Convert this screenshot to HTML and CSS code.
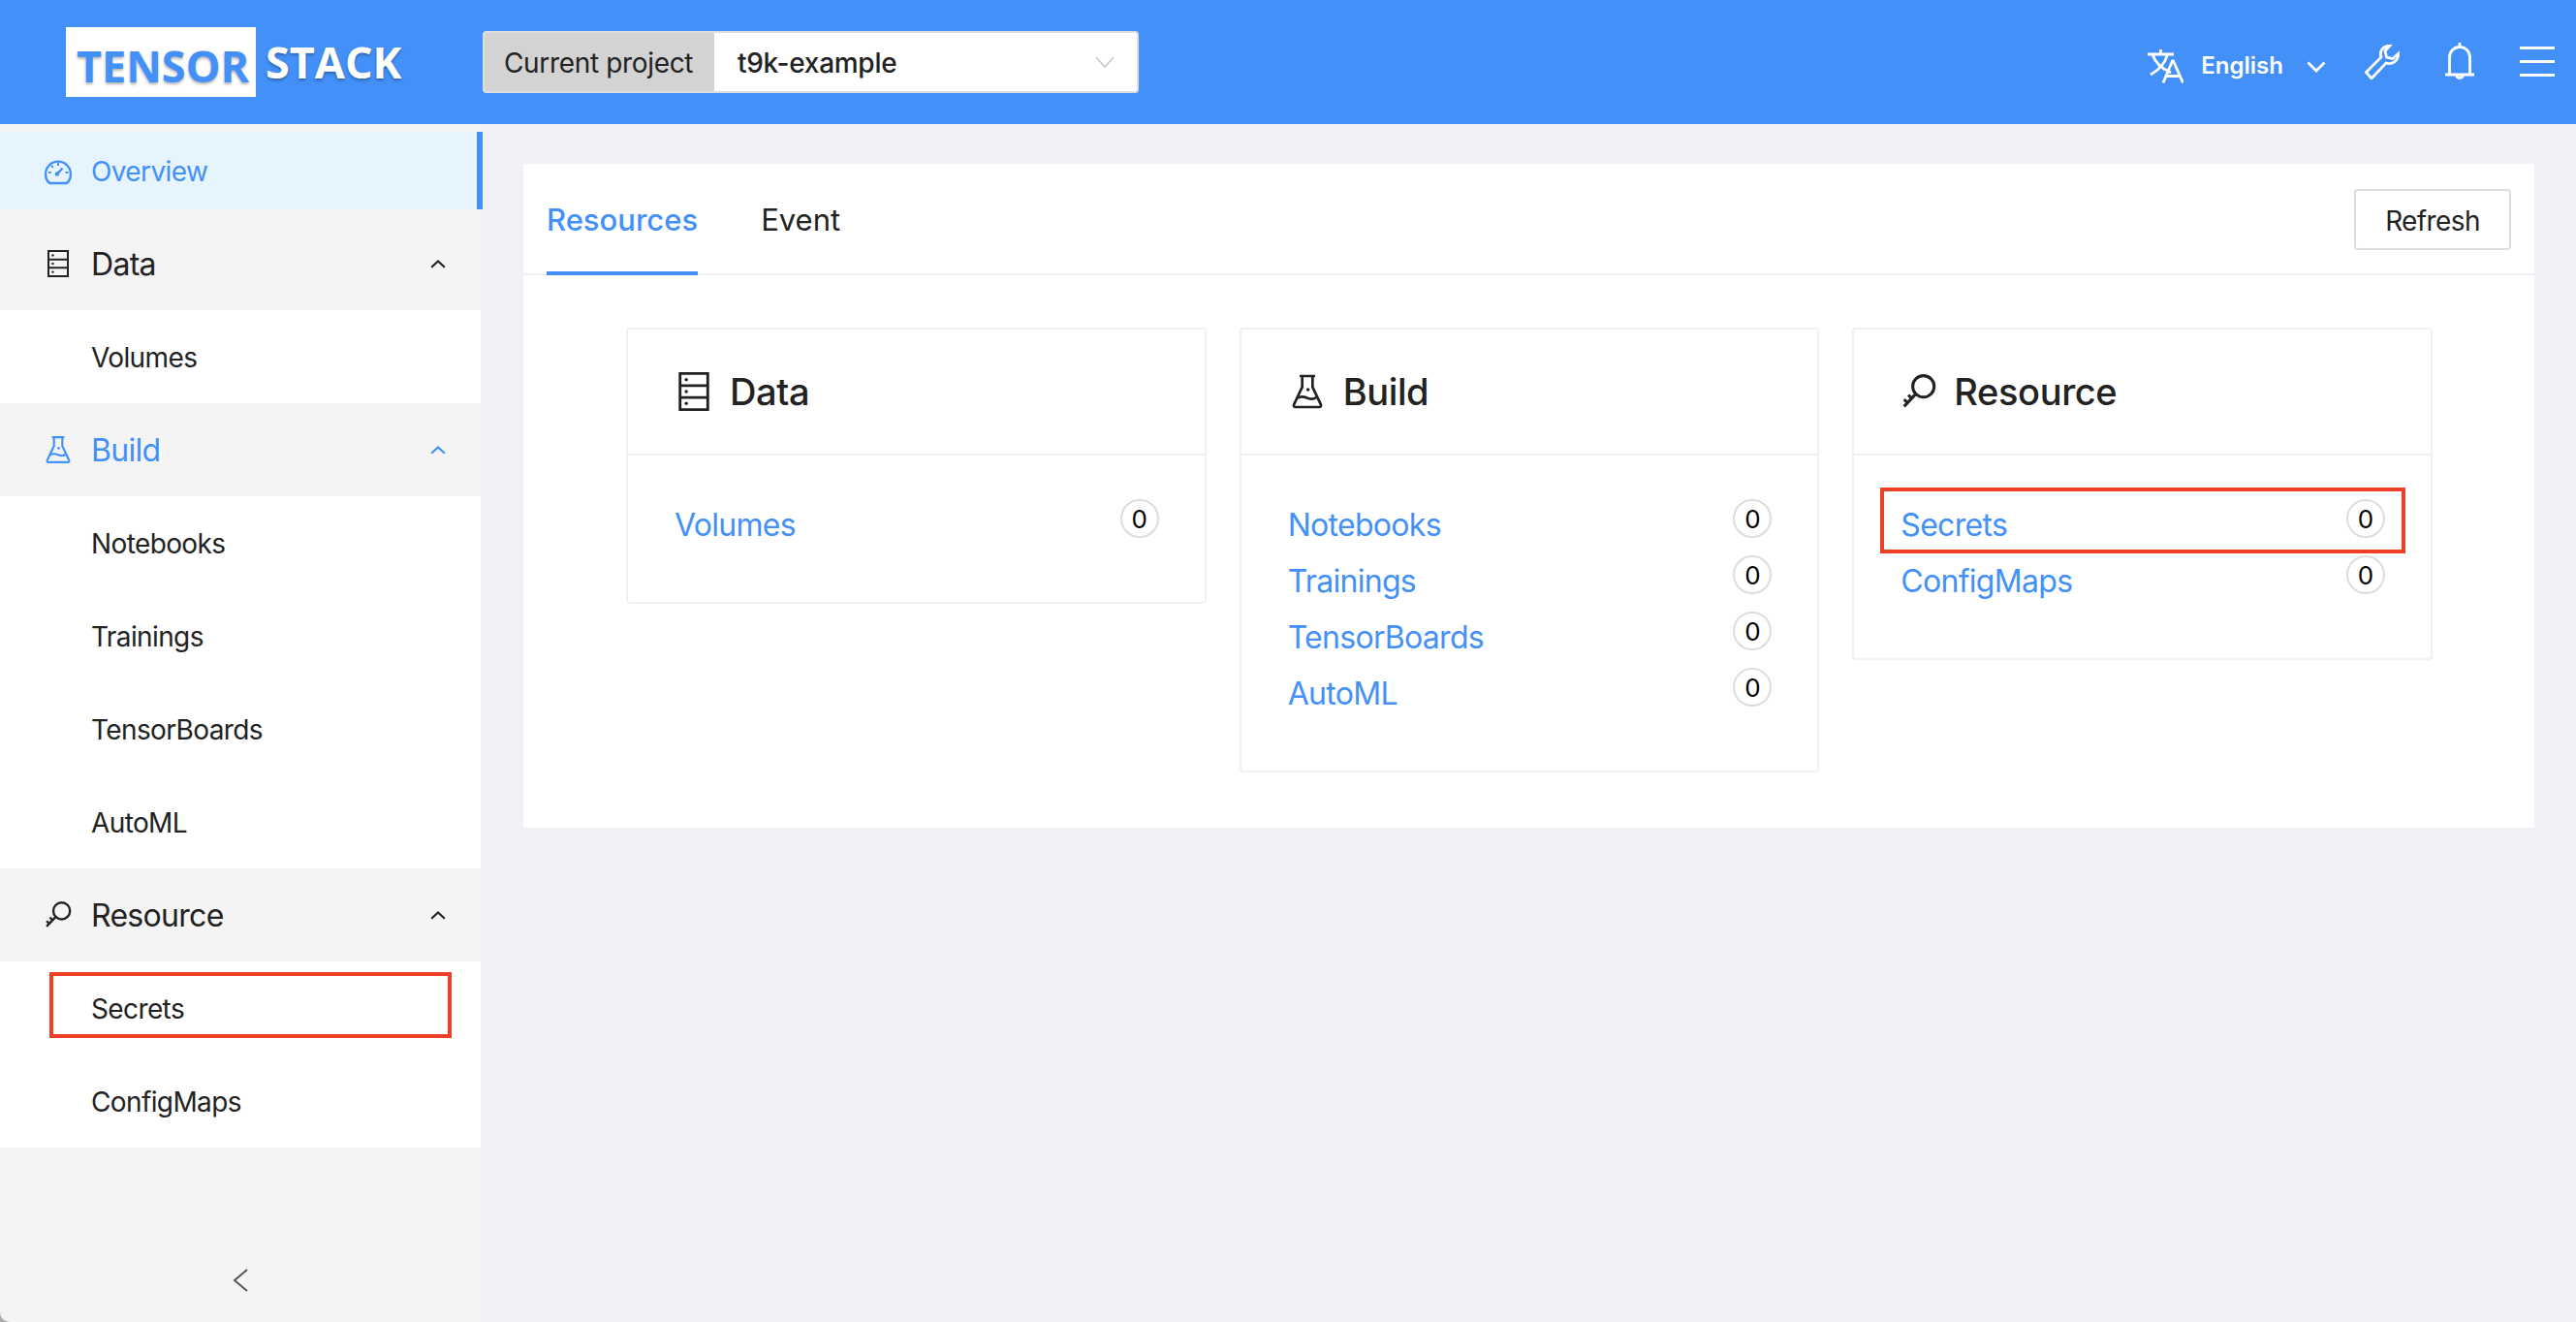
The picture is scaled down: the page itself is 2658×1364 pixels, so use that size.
FILE: index.html
```html
<!DOCTYPE html>
<html>
<head>
    <title>TensorStack</title>
    <link rel="stylesheet" href="styles.css">
</head>
<body>
    <svg class="sprite" width="0" height="0">
        <symbol id="i-gauge" viewBox="0 0 28 27">
            <path d="M6 25.500h16c1 0 1.700-.5 2.200-1.300a13 13 0 1 0-20.400 0c.5.800 1.200 1.300 2.200 1.300z" fill="none" stroke="currentColor" stroke-width="2.400"/>
            <path d="M13 16l5.500-6" fill="none" stroke="currentColor" stroke-width="2.400"/>
            <circle cx="13" cy="16" r="2.200" fill="currentColor"/>
            <path d="M14 4.500v3M4 14.500h2.800M21.500 14.500H24.500M7 7.500l1.800 1.800" fill="none" stroke="currentColor" stroke-width="2"/>
        </symbol>
        <symbol id="i-server" viewBox="0 0 22 28">
            <path d="M1 1h20v26H1zM1 9.700h20M1 18.300h20" fill="none" stroke="currentColor" stroke-width="2"/>
            <circle cx="5.500" cy="5.400" r="1.200" fill="currentColor"/>
            <circle cx="5.500" cy="14" r="1.200" fill="currentColor"/>
            <circle cx="5.500" cy="22.600" r="1.200" fill="currentColor"/>
        </symbol>
        <symbol id="i-flask" viewBox="0 0 24 26">
            <path d="M6 1h12M8 1v8.500L1.600 23c-.5 1.100.1 2 1.300 2h18.200c1.200 0 1.800-.9 1.300-2L16 9.500V1" fill="none" stroke="currentColor" stroke-width="2"/>
            <path d="M4.500 18c3-2.200 5.500-.8 8 .2 2.500.9 4.500.7 6.500-.7" fill="none" stroke="currentColor" stroke-width="2"/>
            <circle cx="12.500" cy="11.500" r="1.300" fill="currentColor"/>
        </symbol>
        <symbol id="i-key" viewBox="0 0 26 27">
            <circle cx="16.500" cy="9.500" r="8.300" fill="none" stroke="currentColor" stroke-width="2.300"/>
            <path d="M10.500 15.500L1.500 25M4.200 22.200l-2.700-2.700M7.500 18.800l-2.700-2.700" fill="none" stroke="currentColor" stroke-width="2.300"/>
        </symbol>
        <symbol id="i-up" viewBox="0 0 16 9">
            <path d="M1.200 7.800L8 1.500l6.800 6.300" fill="none" stroke="currentColor" stroke-width="2.200"/>
        </symbol>
    </svg>

    <header class="topbar">
        <div class="logo">
            <span class="logo-box">TENSOR</span>
            <span class="logo-rest">STACK</span>
        </div>
        <div class="project">
            <span class="project-label">Current project</span>
            <span class="project-value">t9k-example</span>
            <svg class="project-arrow" viewBox="0 0 20 12"><path d="M1 1l9 10 9-10" fill="none" stroke="#c4c4c4" stroke-width="1.500"/></svg>
        </div>
        <div class="topbar-right">
            <svg class="icon-lang" viewBox="0 0 37 36">
                <path d="M0 6h27M13.500 1v5M20.500 6C18.500 14 12 22 3 27M5 6C7 13 13 20 24 25" fill="none" stroke="#fff" stroke-width="2.800"/>
                <path d="M16 35.500L25.500 13h1l10 22.500M19 28.500h14" fill="none" stroke="#fff" stroke-width="2.800"/>
            </svg>
            <span class="lang-name">English</span>
            <svg class="icon-lang-arrow" viewBox="0 0 20 12"><path d="M1.500 1.500L10 10l8.500-8.500" fill="none" stroke="#fff" stroke-width="2.800"/></svg>
            <svg class="icon-wrench" viewBox="0 0 36 36">
                <path d="M1.500 28.500L17 13c-2-5.500 1-11.500 9-12l-5 5.500 1.500 6.500 6.500 1.500 5.500-5c.3 7.500-6 11.500-12.500 9.500L7 35z" fill="none" stroke="#fff" stroke-width="2.800"/>
            </svg>
            <svg class="icon-bell" viewBox="0 0 30 40">
                <path d="M15 0v4M4.500 33V15a10.500 10.500 0 0 1 21 0v18M0 33h30M11.500 33a3.500 3.500 0 0 0 7 0" fill="none" stroke="#fff" stroke-width="2.800"/>
            </svg>
            <div class="hamburger"><i></i><i></i><i></i></div>
        </div>
    </header>

    <div class="layout">
        <nav class="sidebar">
            <a class="nav-top">
                <svg class="nav-icon"><use href="#i-gauge"/></svg>
                Overview
            </a>
            <div class="nav-head">
                <svg class="nav-icon"><use href="#i-server"/></svg>
                Data
                <svg class="nav-arrow"><use href="#i-up"/></svg>
            </div>
            <a class="nav-item">Volumes</a>
            <div class="nav-head nav-head-on">
                <svg class="nav-icon"><use href="#i-flask"/></svg>
                Build
                <svg class="nav-arrow"><use href="#i-up"/></svg>
            </div>
            <a class="nav-item">Notebooks</a>
            <a class="nav-item">Trainings</a>
            <a class="nav-item">TensorBoards</a>
            <a class="nav-item">AutoML</a>
            <div class="nav-head">
                <svg class="nav-icon"><use href="#i-key"/></svg>
                Resource
                <svg class="nav-arrow"><use href="#i-up"/></svg>
            </div>
            <a class="nav-item nav-item-marked">Secrets<span class="mark mark-nav"></span></a>
            <a class="nav-item">ConfigMaps</a>
            <div class="collapse">
                <svg viewBox="0 0 16 24"><path d="M15 1L2 12l13 11" fill="none" stroke="#555" stroke-width="2"/></svg>
            </div>
        </nav>

        <main class="content">
            <section class="panel">
                <div class="tabs">
                    <a class="tab tab-on">Resources</a>
                    <a class="tab">Event</a>
                    <button class="refresh">Refresh</button>
                </div>
                <div class="cards">
                    <div class="card">
                        <div class="card-head">
                            <svg class="card-icon"><use href="#i-server"/></svg>
                            Data
                        </div>
                        <ul class="card-list">
                            <li class="row"><a>Volumes</a><span class="count">0</span></li>
                        </ul>
                    </div>
                    <div class="card">
                        <div class="card-head">
                            <svg class="card-icon"><use href="#i-flask"/></svg>
                            Build
                        </div>
                        <ul class="card-list">
                            <li class="row"><a>Notebooks</a><span class="count">0</span></li>
                            <li class="row"><a>Trainings</a><span class="count">0</span></li>
                            <li class="row"><a>TensorBoards</a><span class="count">0</span></li>
                            <li class="row"><a>AutoML</a><span class="count">0</span></li>
                        </ul>
                    </div>
                    <div class="card">
                        <div class="card-head">
                            <svg class="card-icon card-icon-key"><use href="#i-key"/></svg>
                            Resource
                        </div>
                        <ul class="card-list">
                            <li class="row"><a>Secrets</a><span class="count">0</span><span class="mark mark-row"></span></li>
                            <li class="row"><a>ConfigMaps</a><span class="count">0</span></li>
                        </ul>
                    </div>
                </div>
            </section>
        </main>
    </div>
</body>
</html>
```

FILE: styles.css
```css
/* Reset */
body, ul {
    margin: 0;
    padding: 0;
}

body {
    background-color: #f0f1f5;
    color: #222;
    font-family: Inter, "Liberation Sans", sans-serif;
    font-size: 28px;
    height: 1364px;
    overflow: hidden;
}

.sprite {
    position: absolute;
}

/* Inter runs a little wider here than in the original */
.nav-top, .nav-head, .nav-item, .row a, .refresh {
    letter-spacing: -0.022em;
}

/* Top bar */
.topbar {
    align-items: center;
    background-color: #4390f9;
    color: white;
    display: flex;
    height: 128px;
    padding: 0 22px 0 68px;
    box-sizing: border-box;
}

.logo {
    align-items: center;
    display: flex;
    font-family: "Open Sans", sans-serif;
    font-size: 45px;
    font-weight: 700;
    text-shadow: 0 2px 3px rgba(0, 0, 0, 0.3);
    width: 430px;
}

.logo-box {
    background-color: white;
    color: #4390f9;
    height: 72px;
    line-height: 80px;
    box-sizing: border-box;
    padding-left: 11px;
    width: 196px;
}

.logo-rest {
    line-height: 82px;
    margin-left: 10px;
}

.project {
    align-items: center;
    background-color: white;
    border: 2px solid #ddd;
    border-radius: 4px;
    box-sizing: border-box;
    color: #222;
    display: flex;
    height: 64px;
    width: 677px;
}

.project-label {
    align-items: center;
    background-color: #d3d3d3;
    box-sizing: border-box;
    display: flex;
    height: 100%;
    letter-spacing: -0.012em;
    padding-left: 20px;
    padding-top: 1px;
    width: 237px;
}

.project-value {
    font-weight: 500;
    letter-spacing: -0.01em;
    margin-left: 24px;
    padding-top: 1px;
}

.project-arrow {
    height: 12px;
    margin-left: auto;
    margin-right: 23px;
    width: 20px;
}

.topbar-right {
    align-items: center;
    display: flex;
    margin-left: auto;
}

.icon-lang {
    height: 36px;
    margin-top: 8px;
    width: 37px;
}

.lang-name {
    font-size: 24px;
    font-weight: 600;
    margin-left: 18px;
    margin-top: 6px;
}

.icon-lang-arrow {
    height: 12px;
    margin-left: 24px;
    margin-top: 9px;
    width: 20px;
}

.icon-wrench {
    height: 36px;
    margin-left: 40px;
    margin-top: -1px;
    width: 36px;
}

.icon-bell {
    height: 40px;
    margin-left: 47px;
    margin-top: 0;
    width: 30px;
}

.hamburger {
    display: flex;
    flex-direction: column;
    gap: 11px;
    margin-left: 47px;
    margin-top: -1px;
}

.hamburger i {
    background-color: white;
    display: block;
    height: 3px;
    width: 36px;
}

/* Page below the top bar */
.layout {
    background-color: #aaa;
    display: flex;
    height: 1236px;
}

/* Sidebar */
.sidebar {
    background-color: #f4f4f5;
    border-bottom-left-radius: 10px;
    box-sizing: border-box;
    display: flex;
    flex-direction: column;
    flex-shrink: 0;
    padding-top: 8px;
    width: 496px;
}

.nav-top {
    align-items: center;
    background-color: #e6f4fe;
    border-right: 6px solid #4390f9;
    box-sizing: border-box;
    color: #4390f9;
    display: flex;
    height: 80px;
    margin-bottom: 8px;
    margin-right: -2px;
    padding-left: 46px;
    padding-top: 2px;
    position: relative;
    z-index: 1;
}

.nav-head {
    align-items: center;
    display: flex;
    font-size: 32px;
    height: 96px;
    padding-left: 46px;
    padding-right: 36px;
}

.nav-head-on {
    color: #4390f9;
}

.nav-icon {
    flex-shrink: 0;
    height: 28px;
    margin-right: 20px;
    width: 28px;
}

.nav-arrow {
    height: 9px;
    margin-left: auto;
    width: 16px;
}

.nav-item {
    align-items: center;
    background-color: white;
    box-sizing: border-box;
    display: flex;
    height: 96px;
    padding-left: 94px;
    padding-top: 2px;
    position: relative;
}

/* Red annotation boxes */
.mark {
    border: 4px solid #ee4024;
    box-sizing: border-box;
    height: 68px;
    position: absolute;
}

.mark-nav {
    left: 51px;
    top: 11px;
    width: 415px;
}

.mark-row {
    left: -21px;
    right: -21px;
    top: -12px;
}

.collapse {
    margin-top: auto;
    padding-bottom: 24px;
    text-align: center;
}

.collapse svg {
    height: 24px;
    width: 16px;
}

/* Main panel */
.content {
    background-color: #f0f1f5;
    flex: 1;
    padding: 41px 43px 0 44px;
}

.panel {
    background-color: white;
    padding-bottom: 57px;
}

.tabs {
    align-items: stretch;
    border-bottom: 2px solid #f0f1f5;
    display: flex;
    height: 113px;
    padding: 0 24px;
}

.tab {
    align-items: center;
    border-bottom: 4px solid transparent;
    display: flex;
    font-size: 31px;
    margin-right: 65px;
    margin-bottom: -2px;
    padding-top: 4px;
    box-sizing: border-box;
    height: 115px;
}

.tab-on {
    border-bottom-color: #4390f9;
    color: #4390f9;
    font-weight: 500;
}

.refresh {
    background-color: white;
    border: 2px solid #ddd;
    border-radius: 4px;
    color: #222;
    font-family: inherit;
    font-size: 28px;
    height: 63px;
    margin-left: auto;
    margin-top: 26px;
    padding-top: 3px;
    width: 162px;
}

.cards {
    align-items: start;
    display: grid;
    gap: 34px;
    grid-template-columns: repeat(3, 1fr);
    padding: 54px 105px 0 106px;
}

.card {
    border: 2px solid #f0f1f5;
    border-radius: 4px;
}

.card-head {
    align-items: center;
    border-bottom: 2px solid #f0f1f5;
    display: flex;
    font-size: 38px;
    font-weight: 500;
    height: 128px;
    letter-spacing: -0.01em;
    padding-left: 52px;
}

.card-icon {
    height: 40px;
    margin-right: 21px;
    width: 32px;
}

.card-icon-key {
    height: 36px;
    margin-left: -3px;
    margin-right: 18px;
    width: 36px;
}

.card-list {
    list-style: none;
    padding: 45px 47px 48px 48px;
}

.row {
    align-items: flex-start;
    display: flex;
    height: 58px;
    justify-content: space-between;
    position: relative;
}

.row a {
    color: #4390f9;
    font-size: 32px;
    line-height: 53px;
}

.count {
    align-items: center;
    border: 2px solid #ddd;
    border-radius: 50%;
    box-sizing: border-box;
    color: black;
    display: flex;
    font-size: 26px;
    height: 40px;
    justify-content: center;
    width: 40px;
}
```
